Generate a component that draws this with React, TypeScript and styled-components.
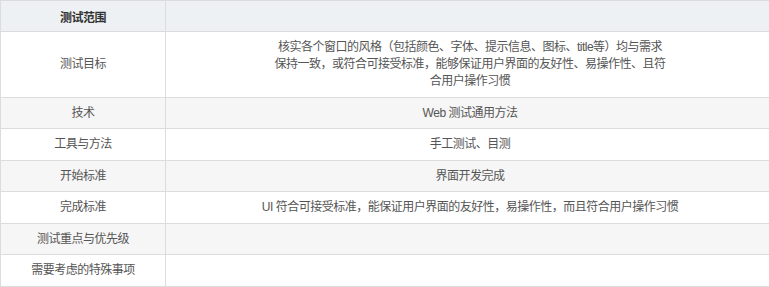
import React from 'react';
import styled, { createGlobalStyle } from 'styled-components';

const GlobalStyle = createGlobalStyle`
  body {
    margin: 0;
    overflow: hidden;
    background: #fff;
    font-family: "Liberation Sans", "Noto Sans CJK SC", Arial, sans-serif;
  }
`;

const Table = styled.table`
  width: 775px;
  border-collapse: collapse;
  table-layout: fixed;
  font-size: 12px;
  letter-spacing: -0.5px;
  color: #555;
`;

const Row = styled.tr<{ $striped?: boolean }>`
  background: ${(p) => (p.$striped ? '#f6f6f6' : '#fff')};
`;

const HeadRow = styled.tr`
  background: #eef1f4;
`;

const HeadCell = styled.th`
  border: 1px solid #dcdcdc;
  height: 30px;
  padding: 0 8px;
  font-weight: bold;
  color: #333;
  text-align: center;
`;

const LabelCell = styled.td`
  width: 148px;
  border: 1px solid #dcdcdc;
  padding: 7px 8px 6.5px;
  line-height: 17px;
  text-align: center;
`;

const ValueCell = styled.td`
  border: 1px solid #dcdcdc;
  padding: 7px 8px 6.5px;
  line-height: 17px;
  text-align: center;
`;

const Para = styled.p`
  margin: 0 auto;
  max-width: 420px;
`;

type Item = { label: string; value?: React.ReactNode };

const items: Item[] = [
  {
    label: '测试目标',
    value: (
      <Para>
        核实各个窗口的风格（包括颜色、字体、提示信息、图标、title等）均与需求
        <br />
        保持一致，或符合可接受标准，能够保证用户界面的友好性、易操作性、且符
        <br />
        合用户操作习惯
      </Para>
    ),
  },
  { label: '技术', value: 'Web 测试通用方法' },
  { label: '工具与方法', value: '手工测试、目测' },
  { label: '开始标准', value: '界面开发完成' },
  { label: '完成标准', value: 'UI 符合可接受标准，能保证用户界面的友好性，易操作性，而且符合用户操作习惯' },
  { label: '测试重点与优先级' },
  { label: '需要考虑的特殊事项' },
];

const App = () => {
  return (
    <>
      <GlobalStyle />
      <Table>
        <thead>
          <HeadRow>
            <HeadCell style={{ width: 148 }}>测试范围</HeadCell>
            <HeadCell />
          </HeadRow>
        </thead>
        <tbody>
          {items.map((it, i) => (
            <Row key={it.label} $striped={i % 2 === 1}>
              <LabelCell>{it.label}</LabelCell>
              <ValueCell>{it.value}</ValueCell>
            </Row>
          ))}
        </tbody>
      </Table>
    </>
  );
};

export default App;
